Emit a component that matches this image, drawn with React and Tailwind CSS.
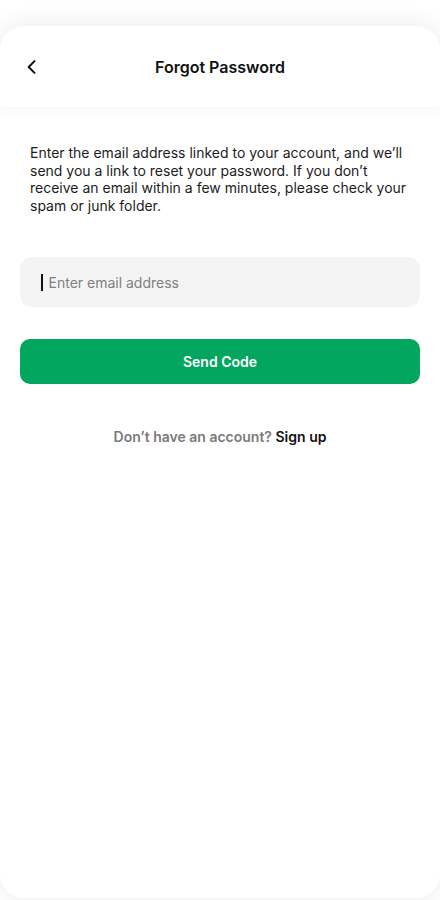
import React from "react";

const ForgotPassword = () => {
  return (
    <div className="min-h-[900px] bg-white pt-[26px] font-[Inter,'Inter_Variable','Inter_Display',sans-serif]">
      <div className="h-[872px] rounded-[24px] bg-white shadow-[0_0_24px_rgba(0,0,0,0.09)] overflow-hidden">
        {/* header */}
        <div className="relative flex h-[81px] items-center justify-center bg-white shadow-[0_4px_10px_rgba(0,0,0,0.035)]">
          <button className="absolute left-[22px] top-[31px] text-[#111]">
            <svg width="20" height="20" viewBox="0 0 24 24" fill="none" stroke="currentColor" strokeWidth="2.4" strokeLinecap="round" strokeLinejoin="round">
              <path d="M15 5l-7 7 7 7" />
            </svg>
          </button>
          <h1 className="text-[16px] font-semibold text-[#111]">Forgot Password</h1>
        </div>

        <div className="px-5">
          <p className="mt-[37px] px-[10px] text-[14px] leading-[17.5px] text-[#1c1c1c]">
            Enter the email address linked to your account, and we’ll send you a link to reset your password. If you don’t receive an email within a few minutes, please check your spam or junk folder.
          </p>

          <div className="mt-[43px] flex h-[50px] items-center rounded-[12px] bg-[#f4f4f4] pl-[21px]">
            <span className="h-[17px] w-[1.5px] bg-[#111]" />
            <input
              type="email"
              placeholder="Enter email address"
              className="ml-[6px] flex-1 bg-transparent text-[14px] text-[#111] placeholder:text-[#808080] outline-none"
            />
          </div>

          <button className="mt-[32px] flex h-[45px] w-full items-center justify-center rounded-[10px] bg-[#02a65f] text-[14px] font-semibold text-white">
            Send Code
          </button>

          <p className="mt-[42px] text-center text-[14px] font-semibold text-[#7a7a7a]">
            Don’t have an account? <span className="text-[#111]">Sign up</span>
          </p>
        </div>
      </div>
    </div>
  );
};

export default ForgotPassword;
